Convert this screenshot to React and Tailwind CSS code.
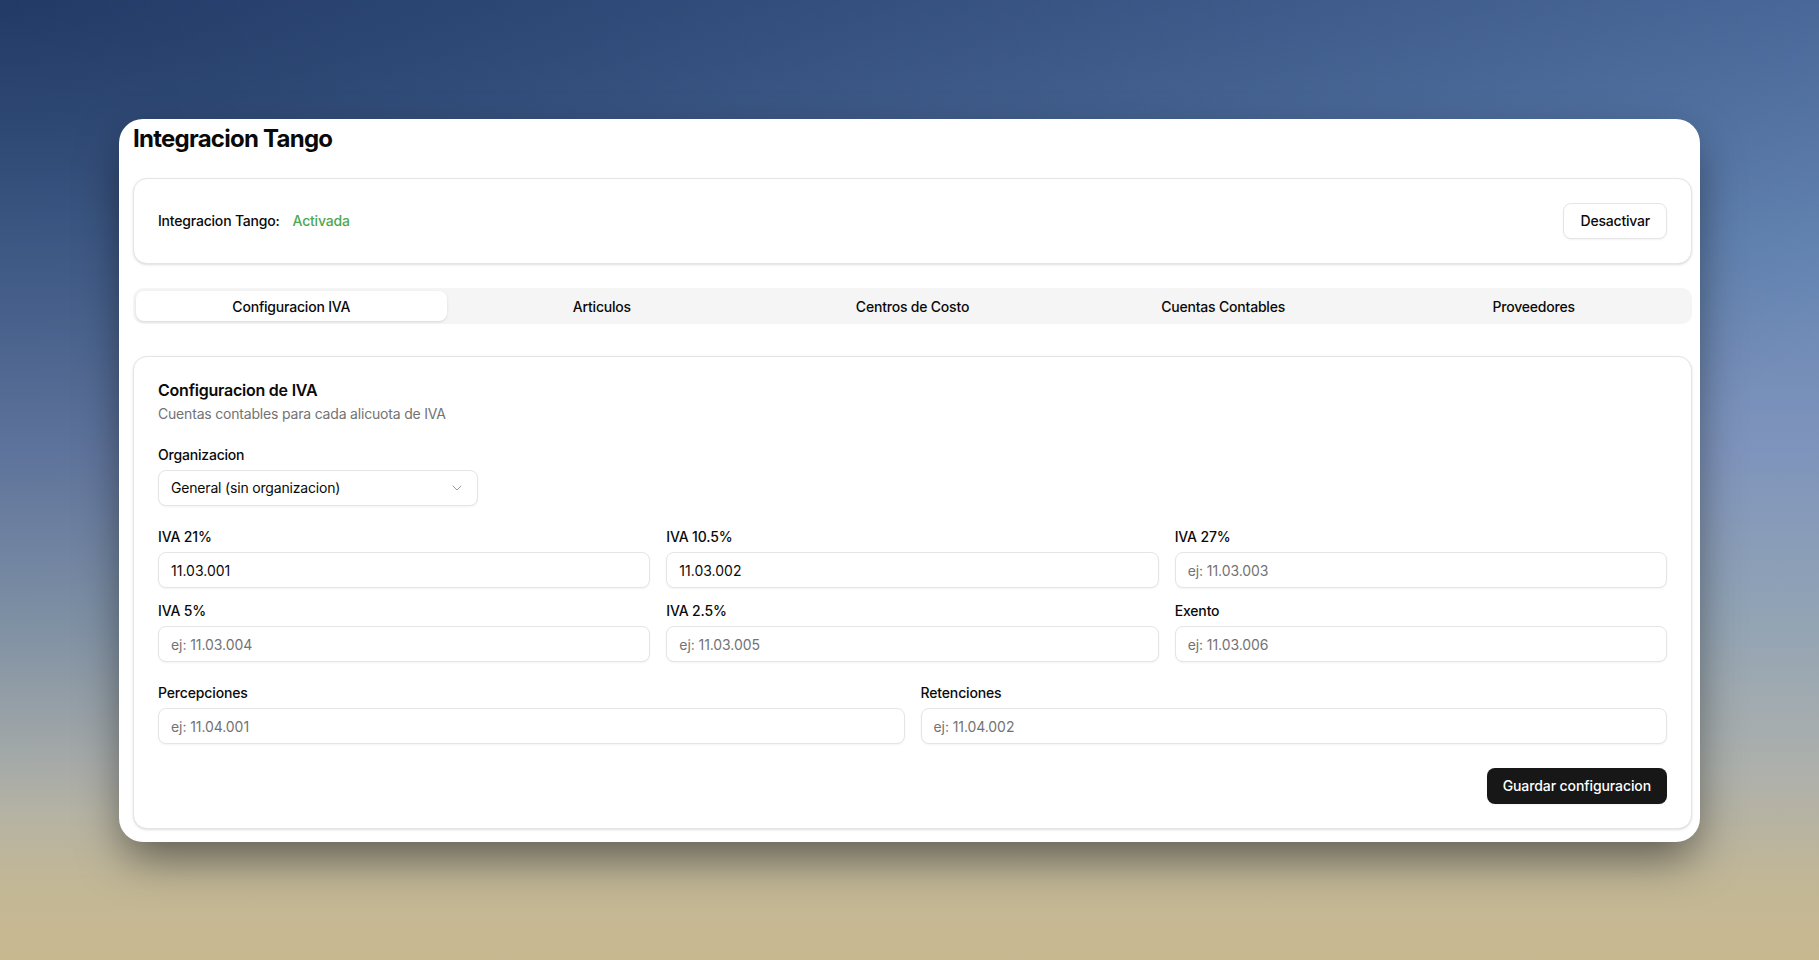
import { ChevronDown } from "lucide-react";

const tabs = ["Configuracion IVA", "Articulos", "Centros de Costo", "Cuentas Contables", "Proveedores"];

const ivaFields = [
  { label: "IVA 21%", value: "11.03.001", placeholder: "ej: 11.03.001" },
  { label: "IVA 10.5%", value: "11.03.002", placeholder: "ej: 11.03.002" },
  { label: "IVA 27%", value: "", placeholder: "ej: 11.03.003" },
  { label: "IVA 5%", value: "", placeholder: "ej: 11.03.004" },
  { label: "IVA 2.5%", value: "", placeholder: "ej: 11.03.005" },
  { label: "Exento", value: "", placeholder: "ej: 11.03.006" },
];

const Field = ({ label, value, placeholder }) => {
  return (
    <div className="flex flex-col gap-2">
      <label className="text-sm leading-none font-medium tracking-[-0.15px]">{label}</label>
      <input
        readOnly
        value={value || ""}
        placeholder={placeholder}
        className="h-9 w-full rounded-lg border border-[#e5e5e5] bg-white px-3 pt-px text-sm shadow-xs outline-none placeholder:tracking-[-0.08px] placeholder:text-[#737373]"
      />
    </div>
  );
};

const App = () => {
  return (
    <div className="flex h-screen items-center justify-center overflow-hidden bg-[radial-gradient(ellipse_110%_85%_at_0%_0%,rgba(5,25,65,0.6)_0%,transparent_100%),linear-gradient(180deg,#4d6c9e_0%,#6485b3_25%,#7f94bc_47%,#93a4b4_65%,#adb0ac_80%,#c2b796_92%,#c9b88f_100%)] font-['Inter',sans-serif] text-[#0a0a0a] antialiased">
      <div className="w-[1581px] rounded-3xl bg-white pt-[3px] pr-2 pb-[13px] pl-[14px] shadow-[0_20px_45px_-5px_rgba(0,0,0,0.5)]">

        <h1 className="pt-px text-2xl leading-[31px] font-bold tracking-[-0.75px]">Integracion Tango</h1>

        <div className="mt-6 flex items-center justify-between rounded-[14px] border border-[#e5e5e5] bg-white p-6 shadow-sm">
          <div className="flex items-center gap-[13px] pt-px text-sm font-medium tracking-[-0.2px]">
            <span>Integracion Tango:</span>
            <span className="text-[#4ea852]">Activada</span>
          </div>
          <button className="h-9 rounded-lg border border-[#e5e5e5] bg-white px-4 pt-px text-sm font-medium tracking-[-0.2px] shadow-xs">
            Desactivar
          </button>
        </div>

        <div className="mt-6 grid h-9 grid-cols-5 rounded-[10px] bg-[#f5f5f5] p-[3px]">
          {tabs.map((tab, i) => (
            <button
              key={tab}
              className={i === 0 ? "rounded-lg bg-white pt-[2px] text-sm font-medium tracking-[-0.2px] shadow-sm" : "rounded-lg pt-[2px] text-sm font-medium tracking-[-0.2px]"}
            >
              {tab}
            </button>
          ))}
        </div>

        <div className="mt-8 rounded-[14px] border border-[#e5e5e5] bg-white p-6 shadow-sm">
          <h2 className="pt-[2px] leading-[14px] font-semibold tracking-[-0.23px]">Configuracion de IVA</h2>
          <p className="mt-1.5 pt-px text-sm leading-[19px] tracking-[-0.19px] text-[#737373]">Cuentas contables para cada alicuota de IVA</p>

          <div className="mt-6 flex flex-col gap-[9px]">
            <label className="pt-px text-sm leading-[13px] font-medium tracking-[-0.2px]">Organizacion</label>
            <button className="flex h-9 w-80 items-center justify-between rounded-lg border border-[#e5e5e5] bg-white px-3 pt-px text-sm tracking-[-0.18px] shadow-xs">
              General (sin organizacion)
              <ChevronDown size={16} strokeWidth={1.5} className="opacity-40" />
            </button>
          </div>

          <div className="mt-6 grid grid-cols-3 gap-4">
            {ivaFields.map((field) => (
              <Field key={field.label} {...field} />
            ))}
          </div>

          <div className="mt-6 grid grid-cols-2 gap-4">
            <Field label="Percepciones" placeholder="ej: 11.04.001" />
            <Field label="Retenciones" placeholder="ej: 11.04.002" />
          </div>

          <div className="mt-6 flex justify-end">
            <button className="h-9 rounded-lg bg-[#171717] px-4 pt-px text-sm font-medium tracking-[-0.1px] text-white shadow-xs">
              Guardar configuracion
            </button>
          </div>
        </div>

      </div>
    </div>
  );
};

export default App;
